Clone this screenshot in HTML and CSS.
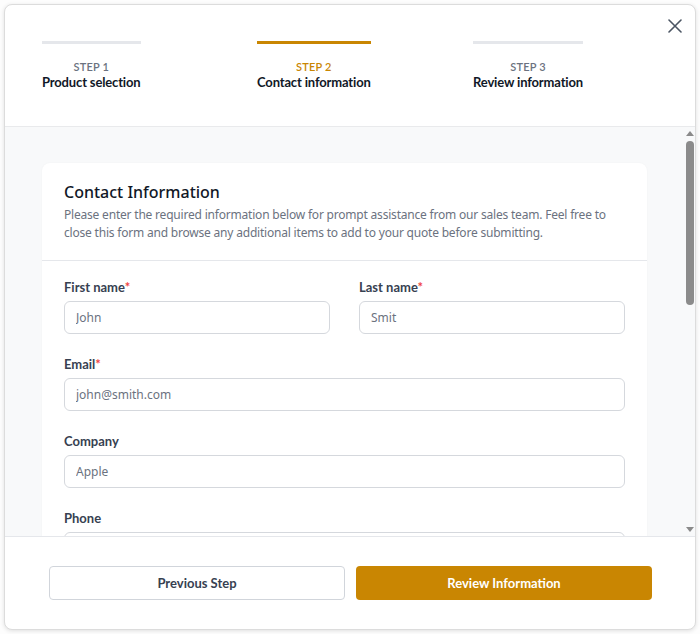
FILE: index.html
```html
<!DOCTYPE html>
<html>

<head>
    <link rel="stylesheet" href="styles.css">
</head>

<body>
    <div class="modal">
        <div class="modal-header">
            <div class="steps">
                <div class="step">
                    <div class="step-bar"></div>
                    <div class="step-num">Step 1</div>
                    <div class="step-name">Product selection</div>
                </div>
                <div class="step active">
                    <div class="step-bar"></div>
                    <div class="step-num">Step 2</div>
                    <div class="step-name">Contact information</div>
                </div>
                <div class="step">
                    <div class="step-bar"></div>
                    <div class="step-num">Step 3</div>
                    <div class="step-name">Review information</div>
                </div>
            </div>
            <button class="close" type="button" aria-label="Close">
                <svg width="14" height="14" viewBox="0 0 14 14">
                    <path d="M1 1 L13 13 M13 1 L1 13" stroke="#4b5563" stroke-width="1.6" stroke-linecap="round" fill="none" />
                </svg>
            </button>
        </div>

        <div class="modal-body">
            <div class="scroll-area">
                <div class="card">
                    <div class="card-head">
                        <h2>Contact Information</h2>
                        <p>Please enter the required information below for prompt assistance from our sales team. Feel free to
                            close this form and browse any additional items to add to your quote before submitting.</p>
                    </div>
                    <form class="card-form">
                        <div class="row">
                            <div class="field">
                                <label>First name<span class="req">*</span></label>
                                <input type="text" placeholder="John">
                            </div>
                            <div class="field">
                                <label>Last name<span class="req">*</span></label>
                                <input type="text" placeholder="Smit">
                            </div>
                        </div>
                        <div class="field">
                            <label>Email<span class="req">*</span></label>
                            <input type="text" placeholder="john@smith.com">
                        </div>
                        <div class="field">
                            <label>Company</label>
                            <input type="text" placeholder="Apple">
                        </div>
                        <div class="field">
                            <label>Phone</label>
                            <input type="text" placeholder="">
                        </div>
                    </form>
                </div>
            </div>
            <div class="scrollbar">
                <div class="arrow up"></div>
                <div class="thumb-track">
                    <div class="thumb"></div>
                </div>
                <div class="arrow down"></div>
            </div>
        </div>

        <div class="modal-footer">
            <button type="button" class="btn btn-secondary">Previous Step</button>
            <button type="button" class="btn btn-primary">Review Information</button>
        </div>
    </div>
</body>

</html>
```

FILE: styles.css
```css
html,
body {
    margin: 0;
    padding: 0;
    height: 634px;
    overflow: hidden;
}

body {
    font-family: Lato, "Noto Sans", sans-serif;
    background-color: #fdfdfd;
    color: #111827;
}

.modal {
    margin: 4px 4px 0 4px;
    height: 626px;
    box-sizing: border-box;
    background-color: #fff;
    border: 1px solid #dcdcdc;
    border-radius: 8px;
    box-shadow: 0 1px 4px rgba(0, 0, 0, 0.12);
    display: flex;
    flex-direction: column;
    overflow: hidden;
}

/* header with steps */
.modal-header {
    position: relative;
    height: 122px;
    flex: none;
    border-bottom: 1px solid #e9eaec;
    padding: 36px 0 0 37px;
    box-sizing: border-box;
}

.steps {
    display: grid;
    grid-template-columns: 215px 216px 215px;
    justify-items: start;
}

.step {
    display: flex;
    flex-direction: column;
    align-items: center;
}

.step-bar {
    align-self: stretch;
    height: 3px;
    background-color: #e5e7eb;
    margin-bottom: 16px;
}

.step-num {
    font-size: 11px;
    line-height: 14px;
    font-weight: 600;
    text-transform: uppercase;
    letter-spacing: 0.2px;
    color: #6b7280;
}

.step-name {
    font-size: 13px;
    line-height: 16px;
    font-weight: 700;
    letter-spacing: -0.15px;
    color: #111827;
}

.step.active .step-bar {
    background-color: #c98602;
}

.step.active .step-num {
    color: #c98602;
}

.close {
    position: absolute;
    top: 9px;
    right: 8px;
    width: 24px;
    height: 24px;
    padding: 0;
    border: none;
    background: none;
    display: flex;
    align-items: center;
    justify-content: center;
    cursor: pointer;
}

/* scrolling body */
.modal-body {
    flex: 1;
    display: flex;
    background-color: #f8f9fa;
    overflow: hidden;
}

.scroll-area {
    flex: 1;
    padding: 36px 37px 0 37px;
    overflow: hidden;
}

.scrollbar {
    width: 11px;
    flex: none;
    display: flex;
    flex-direction: column;
    align-items: center;
    padding: 4px 0 4px 0;
    box-sizing: border-box;
}

.arrow {
    width: 0;
    height: 0;
    border-left: 4px solid transparent;
    border-right: 4px solid transparent;
}

.arrow.up {
    border-bottom: 5px solid #8a8a8a;
}

.arrow.down {
    border-top: 5px solid #8a8a8a;
}

.thumb-track {
    flex: 1;
    width: 100%;
    display: flex;
    justify-content: center;
    padding-top: 5px;
}

.thumb {
    width: 8px;
    height: 164px;
    border-radius: 4px;
    background-color: #8b8b8b;
}

.card {
    background-color: #fff;
    border-radius: 8px;
    box-shadow: 0 0 2px rgba(0, 0, 0, 0.04);
}

.card-head {
    padding: 18px 20px 18px 22px;
    border-bottom: 1px solid #e5e7eb;
}

.card-head h2 {
    margin: 0;
    font-family: "Noto Sans", sans-serif;
    font-size: 16px;
    line-height: 22px;
    font-weight: 500;
    color: #111827;
}

.card-head p {
    margin: 3px 0 0 0;
    font-family: "Noto Sans", sans-serif;
    font-size: 12px;
    line-height: 18px;
    letter-spacing: -0.2px;
    color: #6b7280;
}

.card-form {
    padding: 17px 22px 20px 22px;
}

.row {
    display: grid;
    grid-template-columns: 1fr 1fr;
    column-gap: 29px;
}

.field {
    display: flex;
    flex-direction: column;
    margin-bottom: 21px;
}

.field label {
    font-size: 13px;
    line-height: 18px;
    font-weight: 700;
    color: #374151;
    margin-bottom: 5px;
}

.req {
    color: #ef4444;
}

.field input {
    height: 33px;
    box-sizing: border-box;
    padding: 0 11px;
    border: 1px solid #d5d8dd;
    border-radius: 6px;
    font-family: "Noto Sans", sans-serif;
    font-size: 12px;
    color: #374151;
    background-color: #fff;
}

.field input::placeholder {
    color: #6b7280;
}

/* footer */
.modal-footer {
    flex: none;
    height: 93px;
    box-sizing: border-box;
    border-top: 1px solid #e5e7eb;
    padding: 29px 43px 0 44px;
    display: grid;
    grid-template-columns: 1fr 1fr;
    column-gap: 11px;
    align-items: start;
}

.btn {
    height: 34px;
    border-radius: 4px;
    font-family: Lato, sans-serif;
    font-size: 13px;
    font-weight: 700;
    cursor: pointer;
}

.btn-secondary {
    background-color: #fff;
    color: #374151;
    border: 1px solid #d1d5db;
}

.btn-primary {
    background-color: #c98602;
    color: #fff;
    border: none;
}
```
